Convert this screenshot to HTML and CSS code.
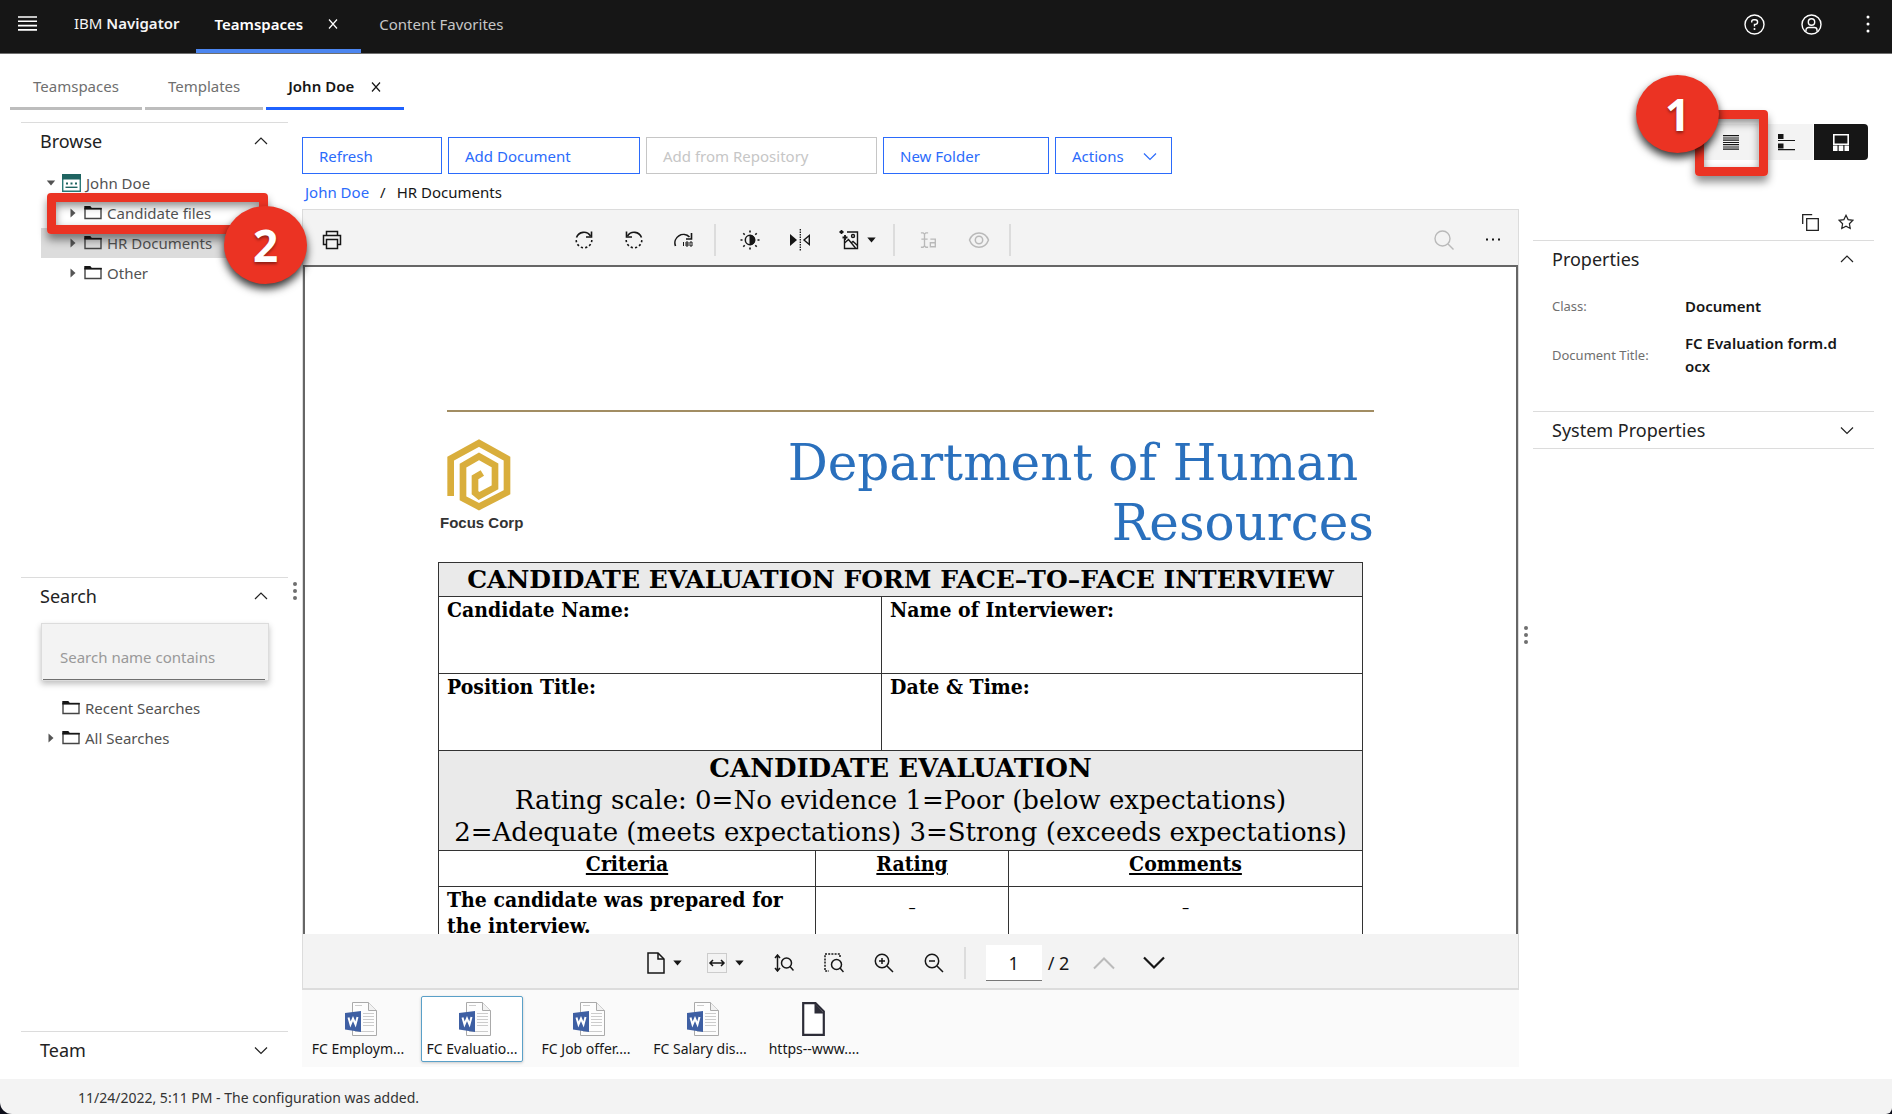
FILE: index.html
```html
<!DOCTYPE html>
<html lang="en">
<head>
<meta charset="utf-8">
<title>IBM Navigator - Teamspaces</title>
<link rel="stylesheet" href="styles.css">
</head>
<body>
<svg class="sprite" aria-hidden="true">
  <symbol id="chev-down" viewBox="0 0 14 14"><path d="M1 4.5l6 6 6-6" fill="none" stroke="currentColor" stroke-width="1.2"/></symbol>
  <symbol id="chev-up" viewBox="0 0 14 14"><path d="M1 10l6-6 6 6" fill="none" stroke="currentColor" stroke-width="1.2"/></symbol>
  <symbol id="close" viewBox="0 0 12 12"><path d="M2 1.500l8 9m0-9l-8 9" fill="none" stroke="currentColor" stroke-width="1.200"/></symbol>
  <symbol id="folder" viewBox="0 0 18 14"><path d="M1 12.500V2.500h16v10z" fill="none" stroke="#444" stroke-width="1.400"/><path d="M.3 0h6l1.500 2H17.700v1.500H.3z" fill="#161616"/></symbol>
  <symbol id="caret-right" viewBox="0 0 6 10"><path d="M.5.5l5 4.500-5 4.500z" fill="#555"/></symbol>
  <symbol id="caret-down" viewBox="0 0 9 6"><path d="M.3.5h8.400L4.500 5.500z" fill="currentColor"/></symbol>
  <symbol id="word" viewBox="-6 0 38 34">
    <path d="M7.500.5h16l8 8v25h-24z" fill="#fdfdfd" stroke="#aaa"/>
    <path d="M23.500.5v8h8" fill="#f2f2f2" stroke="#aaa"/>
    <path d="M10 3.500h7M18 11.500h11M18 14.500h11M18 17.500h11M18 20.500h11M18 23.500h11M10 29.500h19" stroke="#ccc" fill="none"/>
    <path d="M0 11l16-2v21L0 27.500z" fill="#3e5fa3"/>
    <path d="M3.500 15.500l2 7 2.500-6 2.500 6 2-7.500" fill="none" stroke="#fff" stroke-width="2"/>
  </symbol>
</svg>

<header class="topbar">
  <button class="icon-btn menu-btn" aria-label="Menu"><svg width="19" height="15" viewBox="0 0 19 15"><path d="M0 1h19M0 5.300h19M0 9.600h19M0 13.900h19" stroke="#fff" stroke-width="1.600"/></svg></button>
  <a class="brand" href="#">IBM <b>Navigator</b></a>
  <nav class="top-tabs">
    <a class="top-tab active" href="#">Teamspaces<svg width="12" height="12"><use href="#close"/></svg></a>
    <a class="top-tab" href="#">Content Favorites</a>
  </nav>
  <div class="top-actions">
    <button class="icon-btn" aria-label="Help"><svg width="21" height="21" viewBox="0 0 21 21" fill="none" stroke="#fff" stroke-width="1.400"><circle cx="10.500" cy="10.500" r="9.500"/><path d="M7.700 8.600V7.800a2 2 0 0 1 2-2h1.600a2.300 2.300 0 0 1 0 4.600h-.8v2.200"/><circle cx="10.500" cy="15" r="1" fill="#fff" stroke="none"/></svg></button>
    <button class="icon-btn" aria-label="User"><svg width="21" height="21" viewBox="0 0 21 21" fill="none" stroke="#fff" stroke-width="1.400"><circle cx="10.500" cy="10.500" r="9.500"/><circle cx="10.500" cy="8" r="3.200"/><path d="M5 17.500V16a2.500 2.500 0 0 1 2.500-2.500h6A2.500 2.500 0 0 1 16 16v1.500"/></svg></button>
    <button class="icon-btn" aria-label="More"><svg width="4" height="18" viewBox="0 0 4 18" fill="#fff"><circle cx="2" cy="2" r="1.500"/><circle cx="2" cy="9" r="1.500"/><circle cx="2" cy="16" r="1.500"/></svg></button>
  </div>
</header>

<nav class="page-tabs">
  <a class="page-tab" href="#">Teamspaces</a>
  <a class="page-tab" href="#">Templates</a>
  <a class="page-tab active" href="#">John Doe<svg width="12" height="12"><use href="#close"/></svg></a>
</nav>

<div class="workspace">
  <aside class="sidebar">
    <section class="panel grow">
      <button class="panel-head">Browse<svg width="14" height="14"><use href="#chev-up"/></svg></button>
      <ul class="tree">
        <li class="node root"><svg class="twisty" width="9" height="6"><use href="#caret-down"/></svg><svg width="19" height="18" viewBox="0 0 19 18"><path d="M.7.7h17.600v16.600H.7z" fill="#fff" stroke="#2b7a78" stroke-width="1.400"/><path d="M0 0h19v5.500H0z" fill="#1f6461"/><path d="M4 9.500h2m2.500 0h2m2.500 0h2" stroke="#1f6461" stroke-width="1.800"/><path d="M3.500 13.300h12" stroke="#1f6461" stroke-width="1.400"/></svg>John Doe</li>
        <li class="node child">
          <svg class="twisty" width="6" height="10"><use href="#caret-right"/></svg><svg width="18" height="14"><use href="#folder"/></svg>Candidate files
          <span class="mark mark-files"></span><span class="badge badge-two">2</span>
        </li>
        <li class="node child selected"><svg class="twisty" width="6" height="10"><use href="#caret-right"/></svg><svg width="18" height="14"><use href="#folder"/></svg>HR Documents</li>
        <li class="node child"><svg class="twisty" width="6" height="10"><use href="#caret-right"/></svg><svg width="18" height="14"><use href="#folder"/></svg>Other</li>
      </ul>
    </section>
    <section class="panel grow">
      <button class="panel-head">Search<svg width="14" height="14"><use href="#chev-up"/></svg></button>
      <label class="search-field"><input type="text" placeholder="Search name contains" aria-label="Search name contains"></label>
      <ul class="tree">
        <li class="node root"><span class="twisty"></span><svg width="18" height="14"><use href="#folder"/></svg>Recent Searches</li>
        <li class="node root"><svg class="twisty" width="6" height="10"><use href="#caret-right"/></svg><svg width="18" height="14"><use href="#folder"/></svg>All Searches</li>
      </ul>
    </section>
    <section class="panel">
      <button class="panel-head">Team<svg width="14" height="14"><use href="#chev-down"/></svg></button>
    </section>
  </aside>
  <div class="splitter"><i></i><i></i><i></i></div>

  <main class="main">
    <div class="actions">
      <button class="action w-refresh">Refresh</button>
      <button class="action w-add">Add Document</button>
      <button class="action w-repo" disabled>Add from Repository</button>
      <button class="action w-folder">New Folder</button>
      <button class="action w-actions">Actions<svg width="14" height="14"><use href="#chev-down"/></svg></button>
    </div>
    <nav class="crumbs"><a href="#">John Doe</a><span>/</span><span>HR Documents</span></nav>

    <div class="viewer">
      <div class="toolbar">
        <button class="tool" aria-label="Print"><svg width="20" height="20" viewBox="0 0 20 20" fill="none" stroke="#161616" stroke-width="1.500"><path d="M4.500 5.500v-4h11v4M4.500 14.500H1.500v-9h17v9h-3"/><path d="M4.500 9.500h11v9h-11z"/></svg></button>
        <div class="tool-group">
          <button class="tool" aria-label="Rotate clockwise"><svg width="20" height="20" viewBox="0 0 20 20" fill="none" stroke="#161616" stroke-width="1.600"><path d="M2.500 7.500a7.800 7.800 0 0 1 14-1.500"/><path d="M17.500 1.500v5.500H12"/><path d="M17.800 10a7.800 7.800 0 0 1-15.600 0" stroke-dasharray="2.200 2.200"/></svg></button>
          <button class="tool" aria-label="Rotate counterclockwise"><svg width="20" height="20" viewBox="0 0 20 20" fill="none" stroke="#161616" stroke-width="1.600"><path d="M17.500 7.500a7.800 7.800 0 0 0-14-1.500"/><path d="M2.500 1.500v5.500H8"/><path d="M2.200 10a7.800 7.800 0 0 0 15.600 0" stroke-dasharray="2.200 2.200"/></svg></button>
          <button class="tool" aria-label="Rotate 180"><svg width="20" height="20" viewBox="0 0 20 20" fill="none" stroke="#161616" stroke-width="1.600"><path d="M1.500 16a8.500 8.500 0 0 1 14-9"/><path d="M17.500 3v6H12"/><path d="M9.500 12v4M12 12h2v4h-2zm0 2h2M16 12h2v4h-2z" stroke-width="1"/></svg></button>
          <span class="rule"></span>
          <button class="tool" aria-label="Brightness"><svg width="20" height="20" viewBox="0 0 20 20" fill="none" stroke="#161616"><circle cx="10" cy="10" r="4.700" stroke-width="1.500"/><path d="M10 5.300a4.700 4.700 0 0 1 0 9.400z" fill="#161616"/><path d="M10 .5v2m0 15v2M.5 10h2m15 0h2M3.300 3.300l1.400 1.400m10.600 10.600l1.400 1.400m0-13.400l-1.400 1.400M4.700 15.300l-1.400 1.400" stroke-width="1.600"/></svg></button>
          <button class="tool" aria-label="Flip"><svg width="22" height="22" viewBox="0 0 22 22"><path d="M1 5v12l7-6z" fill="#161616"/><path d="M20.300 6.500v9L15 11z" fill="none" stroke="#161616" stroke-width="1.400"/><path d="M11.300 0v22" stroke="#161616" stroke-width="1.300" stroke-dasharray="1.500 1"/></svg></button>
          <button class="tool drop" aria-label="Image"><svg width="20" height="20" viewBox="0 0 20 20" fill="none" stroke="#161616" stroke-width="1.400"><path d="M8 2h10.500v16.500h-13V9"/><circle cx="14" cy="6" r="1.500"/><path d="M5.500 13l4-3.500 7 8.500M12 13l2-1.500 4.500 4"/><path d="M2.500 0v4M.5 2h4M6 5v5M3.500 7.500h5" stroke-width="1.800"/></svg><svg width="9" height="6"><use href="#caret-down"/></svg></button>
          <span class="rule"></span>
          <button class="tool" aria-label="Select text" disabled><svg width="18" height="18" viewBox="0 0 20 20" fill="none" stroke="#b9b9b9" stroke-width="1.500"><path d="M1 2h2.500L5 3.500 6.500 2H9M5 3.500v13M1 18h2.500L5 16.500 6.500 18H9M1.500 9h7M11.500 9h5.500v8.500h-5.500v-4.500h5.500"/></svg></button>
          <button class="tool" aria-label="Show" disabled><svg width="22" height="20" viewBox="0 0 22 20" fill="none" stroke="#b9b9b9" stroke-width="1.500"><path d="M1.500 10C5 .5 17 .5 20.500 10 17 19.500 5 19.500 1.500 10z"/><circle cx="11" cy="10" r="3.700"/></svg></button>
          <span class="rule"></span>
        </div>
        <div class="tool-end">
          <button class="tool" aria-label="Find" disabled><svg width="20" height="20" viewBox="0 0 20 20" fill="none" stroke="#b9b9b9" stroke-width="1.400"><circle cx="8.500" cy="8.500" r="7.500"/><path d="M14 14l5.500 5.500"/></svg></button>
          <button class="tool" aria-label="More"><svg width="14" height="3" viewBox="0 0 14 3" fill="#161616"><path d="M0 .5h2v2H0zM6 .5h2v2H6zM12 .5h2v2h-2z"/></svg></button>
        </div>
      </div>

      <div class="canvas">
        <article class="sheet">
          <header class="sheet-head">
            <div class="corp"><svg width="64" height="72" viewBox="82 145 192 216"><path d="M93 316V204L178 157l84 47v101l-84 43-48-25v-98l48-28 48 27v66l-48 26-12-10v-46l22-13" fill="none" stroke="#d9ae3c" stroke-width="20"/></svg><strong>Focus Corp</strong></div>
            <h1>Department of Human&nbsp;<br>Resources</h1>
          </header>
          <table class="form">
            <colgroup><col class="half"><col></colgroup>
            <tr><th class="shade title" colspan="2">CANDIDATE EVALUATION FORM FACE–TO–FACE INTERVIEW</th></tr>
            <tr class="tall"><th>Candidate Name:</th><th>Name of Interviewer:</th></tr>
            <tr class="tall"><th>Position Title:</th><th>Date &amp; Time:</th></tr>
          </table>
          <table class="form rate-form">
            <colgroup><col class="c-crit"><col class="c-rate"><col></colgroup>
            <tr><td class="shade scale" colspan="3"><b>CANDIDATE EVALUATION</b><br>Rating scale: 0=No evidence 1=Poor (below expectations)<br>2=Adequate (meets expectations) 3=Strong (exceeds expectations)</td></tr>
            <tr class="heads"><th>Criteria</th><th>Rating</th><th>Comments</th></tr>
            <tr><th>The candidate was prepared for the interview.</th><td class="dash">–</td><td class="dash">–</td></tr>
          </table>
        </article>
      </div>

      <div class="toolbar pager">
        <button class="tool drop" aria-label="Page layout"><svg width="18" height="22" viewBox="0 0 18 22" fill="none" stroke="#161616" stroke-width="1.500"><path d="M1 1h10l6 6v14H1z"/><path d="M11 1v6h6"/></svg><svg width="9" height="6"><use href="#caret-down"/></svg></button>
        <button class="tool drop" aria-label="Fit width"><svg width="20" height="20" viewBox="0 0 20 20" fill="none"><rect x=".5" y=".5" width="19" height="19" stroke="#ccc"/><path d="M3 10h14M6 7l-3 3 3 3M14 7l3 3-3 3" stroke="#161616" stroke-width="1.500"/></svg><svg width="9" height="6"><use href="#caret-down"/></svg></button>
        <button class="tool" aria-label="Fit height"><svg width="20" height="18" viewBox="0 0 20 18" fill="none" stroke="#161616" stroke-width="1.500"><path d="M3.500 1.500v15M1 4l2.500-3L6 4M1 14l2.500 3L6 14"/><circle cx="12.500" cy="9" r="5"/><path d="M16 12.500l3.500 4"/></svg></button>
        <button class="tool" aria-label="Zoom area"><svg width="20" height="20" viewBox="0 0 20 20" fill="none" stroke="#161616" stroke-width="1.500"><path d="M16 4V1H1v17h4" stroke-dasharray="2 1.200"/><circle cx="12.500" cy="11.500" r="5"/><path d="M16 15l3.500 4"/></svg></button>
        <button class="tool" aria-label="Zoom in"><svg width="20" height="20" viewBox="0 0 20 20" fill="none" stroke="#161616" stroke-width="1.500"><circle cx="8" cy="8" r="6.700"/><path d="M13 13l6 6M8 5v6M5 8h6"/></svg></button>
        <button class="tool" aria-label="Zoom out"><svg width="20" height="20" viewBox="0 0 20 20" fill="none" stroke="#161616" stroke-width="1.500"><circle cx="8" cy="8" r="6.700"/><path d="M13 13l6 6M5 8h6"/></svg></button>
        <span class="rule"></span>
        <label class="page-no"><input type="text" value="1" aria-label="Page number">/ 2</label>
        <button class="tool" aria-label="Previous page" disabled><svg width="24" height="14" viewBox="0 0 24 14"><path d="M2 12.500L12 2.500l10 10" fill="none" stroke="#bbb" stroke-width="2"/></svg></button>
        <button class="tool" aria-label="Next page"><svg width="24" height="14" viewBox="0 0 24 14"><path d="M2 1.500l10 10 10-10" fill="none" stroke="#161616" stroke-width="2.200"/></svg></button>
      </div>
    </div>

    <div class="filmstrip">
      <button class="film"><svg width="38" height="34"><use href="#word"/></svg>FC Employm...</button>
      <button class="film current"><svg width="38" height="34"><use href="#word"/></svg>FC Evaluatio...</button>
      <button class="film"><svg width="38" height="34"><use href="#word"/></svg>FC Job offer....</button>
      <button class="film"><svg width="38" height="34"><use href="#word"/></svg>FC Salary dis...</button>
      <button class="film"><svg width="32" height="34" viewBox="0 0 32 34"><path d="M5.200 1.200h12.300l8.300 8.300v23.300H5.200z" fill="#fff" stroke="#2d2d38" stroke-width="2.200"/><path d="M16.500 1v10.500H26z" fill="#2d2d38"/></svg>https--www....</button>
    </div>
  </main>
  <div class="splitter low"><i></i><i></i><i></i></div>

  <aside class="details">
    <div class="views">
      <button class="view first" aria-label="Details view"><svg width="16" height="15" viewBox="0 0 16 15"><path d="M0 .7h16M0 3h16M0 5.200h16M0 7.500h16M0 9.700h16M0 12h16M0 14.200h16" stroke="#161616" stroke-width="1.200"/></svg><span class="mark mark-view"></span><span class="badge badge-one">1</span></button>
      <button class="view" aria-label="List view"><svg width="17" height="17" viewBox="0 0 17 17"><path d="M0 0h5.500v5H0zM0 9.500h5.500v5H0z" fill="#161616"/><path d="M0 6.500h17M0 15.700h17" stroke="#161616" stroke-width="1.200"/></svg></button>
      <button class="view on" aria-label="Filmstrip view"><svg width="16" height="17" viewBox="0 0 16 17"><path d="M.8.800h14.400v9.400H.8z" fill="none" stroke="#fff" stroke-width="1.600"/><path d="M0 11.500h4.500V17H0zM5.700 11.500h4.600V17H5.700zM11.500 11.500H16V17h-4.500z" fill="#fff"/></svg></button>
    </div>
    <div class="doc-tools">
      <button class="icon-btn" aria-label="Copy"><svg width="17" height="17" viewBox="0 0 17 17" fill="none" stroke="#222" stroke-width="1.300"><path d="M4.700 4.700h11.600v11.600H4.700zM.7 10V.7h9.500"/></svg></button>
      <button class="icon-btn" aria-label="Favorite"><svg width="16" height="16" viewBox="0 0 16 16" fill="none" stroke="#222" stroke-width="1.200"><path d="M8 1.300l2.100 4.300 4.800.7-3.500 3.400.8 4.800L8 12.200l-4.200 2.300.8-4.800L1.100 6.300l4.800-.7z"/></svg></button>
    </div>
    <section class="props">
      <button class="props-head">Properties<svg width="14" height="14"><use href="#chev-up"/></svg></button>
      <dl>
        <dt>Class:</dt><dd>Document</dd>
        <dt>Document Title:</dt><dd>FC Evaluation form.docx</dd>
      </dl>
    </section>
    <section class="props last">
      <button class="props-head">System Properties<svg width="14" height="14"><use href="#chev-down"/></svg></button>
    </section>
  </aside>
</div>

<footer class="status">11/24/2022, 5:11 PM - The configuration was added.</footer>
</body>
</html>
```

FILE: styles.css
```css
* { box-sizing: border-box; }

body {
  display: flex;
  flex-direction: column;
  height: 100vh;
  margin: 0;
  background: #0d0e1a;
  color: #161616;
  font-family: "Noto Sans", sans-serif;
  font-size: 15px;
  line-height: 20px;
}

button, input { font: inherit; color: inherit; }
button { padding: 0; border: 0; background: none; }
a { color: inherit; text-decoration: none; }
svg { display: block; flex: none; }
ul, dl, dd { margin: 0; padding: 0; list-style: none; }
.sprite { position: absolute; width: 0; height: 0; }
.icon-btn { display: grid; place-items: center; width: 24px; height: 24px; }

/* Top bar */
.topbar {
  display: flex;
  height: 54px;
  flex: none;
  background: #161616;
  border-bottom: 1px solid #6f6f6f;
  color: #f4f4f4;
}
.menu-btn { margin: 11px 0 0 15px; }
.brand { margin: 13px 17px 0 35px; }
.brand b { font-weight: 600; }
.top-tabs { display: flex; }
.top-tab {
  display: flex;
  gap: 24px;
  height: 53px;
  padding: 14px 18px 0;
  color: #c6c6c6;
}
.top-tab svg { margin-top: 4px; }
.top-tab.active { padding-right: 22px; border-bottom: 4px solid #4c86f0; color: #fff; font-weight: 600; }
.top-actions { display: flex; gap: 33px; margin: 12px 12px 0 auto; }

/* Second level tabs */
.page-tabs { display: flex; flex: none; gap: 3px; height: 56px; padding-left: 10px; background: #fff; }
.page-tab {
  display: flex;
  gap: 16px;
  padding: 22px 23px 0;
  border-bottom: 3px solid #bdbdbd;
  color: #6f6f6f;
}
.page-tab svg { margin-top: 5px; }
.page-tab.active { padding: 22px 22px 0; border-color: #1f62ff; color: #161616; font-weight: 600; }

.workspace { display: flex; flex: 1; min-height: 0; background: #fff; }

/* Left column */
.sidebar { display: flex; flex-direction: column; flex: none; width: 267px; margin: 12px 0 0 21px; }
.panel { border-top: 1px solid #dcdcdc; min-height: 48px; }
.grow { flex: 1; }
.panel-head, .props-head {
  display: flex;
  align-items: center;
  justify-content: space-between;
  width: 100%;
  height: 36px;
  padding: 0 20px 0 19px;
  font-size: 18px;
  color: #222;
}
.tree { margin-left: 20px; }
.grow:first-child .tree { margin-top: 9px; }
.node {
  position: relative;
  display: flex;
  align-items: center;
  height: 30px;
  gap: 5px;
  color: #525252;
}
.root { padding-left: 4px; }
.child { padding-left: 26px; }
.twisty { width: 12px; color: #525252; }
.selected { background: #dcdcdc; }
.search-field {
  display: block;
  height: 58px;
  margin: 9px 19px 12px 20px;
  padding: 0 3px 0 1px;
  background: #f3f3f3;
  border: 1px solid #dcdcdc;
  box-shadow: 0 3px 6px rgba(0, 0, 0, .25);
}
.search-field input {
  width: 100%;
  height: 56px;
  padding: 12px 16px 0 17px;
  border: 0;
  border-bottom: 1px solid #6f6f6f;
  background: none;
}
.search-field input::placeholder { color: #999; opacity: 1; }

.splitter { display: grid; align-content: center; justify-content: center; gap: 3px; width: 14px; padding-bottom: 8px; }
.splitter i { width: 4px; height: 4px; border-radius: 50%; background: #6f6f6f; }
.splitter.low { padding: 80px 0 0; }

/* Centre column */
.main { display: flex; flex-direction: column; flex: 1; min-width: 0; margin-bottom: 12px; }
.actions { display: flex; gap: 6px; margin-top: 27px; }
.action {
  display: flex;
  align-items: center;
  justify-content: space-between;
  height: 37px;
  padding: 0 16px;
  border: 1px solid #2b6bfb;
  color: #2b6bfb;
}
.action:disabled { border-color: #c6c6c6; color: #c6c6c6; }
.w-refresh { width: 140px; }
.w-add { width: 192px; }
.w-repo { width: 231px; }
.w-folder { width: 166px; }
.w-actions { width: 117px; padding-right: 14px; }
.crumbs { display: flex; gap: 11px; height: 35px; padding: 8px 3px 0; }
.crumbs a { color: #2b6bfb; }

.viewer {
  display: flex;
  flex-direction: column;
  flex: 1;
  min-height: 0;
  border: 1px solid #dcdcdc;
  border-bottom: 2px solid #dcdcdc;
}
.toolbar { display: flex; align-items: center; flex: none; height: 55px; padding: 4px 10px 0 14px; background: #f3f3f3; }
.tool { display: flex; align-items: center; justify-content: center; min-width: 30px; height: 30px; }
.tool-group { display: flex; align-items: center; gap: 20px; margin-left: 222px; }
.tool-end { display: flex; gap: 19px; margin-left: auto; }
.drop { gap: 8px; }
.tool-group .drop { margin: 0 2px 0 4px; }
.rule { width: 2px; height: 32px; background: #dcdcdc; }
.tool-group .rule { margin: 0 -1px 0 -5px; }

.canvas { flex: 1; min-height: 0; overflow: hidden; border: 2px solid #666; border-width: 2px 2px 0; background: #fff; }
.sheet { width: 945px; margin: 143px auto 0; color: #000; font-family: "DejaVu Serif", serif; }
.sheet-head { display: flex; justify-content: space-between; height: 152px; margin: 0 9px; border-top: 2px solid #a28d63; }
.corp { display: grid; align-content: start; gap: 2px; margin: 27px 0 0 -7px; font-family: "Liberation Sans", sans-serif; font-size: 15px; }
.corp svg { margin-left: 7px; }
.corp strong { color: #333; }
.sheet h1 { margin: 21px 0 0; color: #2a70bd; font-size: 50px; font-weight: 400; line-height: 60px; text-align: right; }
.form { width: 925px; border-collapse: collapse; table-layout: fixed; font-family: "DejaVu Serif Condensed", "DejaVu Serif", serif; font-size: 21px; line-height: 26px; }
.form th, .form td { padding: 0 8px; border: 1px solid #333; font-weight: 700; text-align: left; vertical-align: top; }
.form .shade { padding: 1px 0 0; background: #eaeaea; text-align: center; font-family: "DejaVu Serif", serif; font-size: 26px; line-height: 32px; }
.form .title { height: 34px; font-size: 25px; }
.tall { height: 77px; }
.half { width: 443px; }
.rate-form { margin-top: -1px; }
.form .scale { height: 100px; font-weight: 400; }
.form .heads th { height: 36px; text-align: center; text-decoration: underline; }
.c-crit { width: 377px; }
.c-rate { width: 193px; }
.form .dash { padding-top: 8px; text-align: center; font-size: 16px; font-weight: 400; }

.pager { justify-content: center; gap: 20px; height: 54px; padding: 4px 5px 0 0; }
.pager .drop { margin-right: 5px; }
.pager .rule { margin: 0 0 0 -5px; }
.page-no { display: flex; align-items: center; gap: 6px; font-size: 18px; }
.page-no input { width: 56px; height: 36px; padding: 0; border: 0; border-bottom: 1px solid #777; background: #fff; text-align: center; }

.filmstrip { display: flex; gap: 12px; flex: none; height: 77px; padding: 6px 5px; background: #fafafa; }
.film {
  display: flex;
  flex-direction: column;
  align-items: center;
  gap: 3px;
  width: 102px;
  height: 66px;
  padding: 5px 0 0;
  border: 1px solid transparent;
  border-radius: 2px;
  font-size: 14px;
}
.film.current { border-color: #5aa0c8; background: #fff; box-shadow: 0 1px 3px rgba(0, 0, 0, .2); }

/* Right column */
.details { flex: none; width: 341px; margin-right: 18px; }
.views { display: flex; justify-content: flex-end; margin: 14px 6px 0 0; }
.view { position: relative; display: grid; place-items: center; width: 54px; height: 36px; background: #f3f3f3; }
.view + .view { margin-left: 1px; }
.view.on { border-radius: 0 4px 4px 0; background: #161616; }
.doc-tools { display: flex; justify-content: flex-end; gap: 12px; margin: 50px 16px 6px 0; }
.props { border-top: 1px solid #dcdcdc; }
.props dl {
  display: grid;
  grid-template-columns: 133px 156px;
  align-items: center;
  row-gap: 14px;
  margin: 18px 0 33px 19px;
  line-height: 23px;
}
.props dt { color: #6f6f6f; font-size: 13px; }
.props dd { font-weight: 600; word-break: break-all; }
.last { border-bottom: 1px solid #dcdcdc; }

/* Step markers laid over the interface */
.mark { position: absolute; z-index: 1; border: 9px solid #eb3323; border-radius: 4px; box-shadow: 0 6px 9px rgba(0, 0, 0, .45), inset 0 4px 9px rgba(0, 0, 0, .45); pointer-events: none; }
.mark-files { top: -5px; left: 6px; width: 221px; height: 41px; }
.mark-view { top: -14px; left: -9px; width: 73px; height: 66px; }
.badge {
  position: absolute;
  z-index: 2;
  display: grid;
  place-items: center;
  width: 83px;
  height: 78px;
  border-radius: 50%;
  background: #eb3323;
  box-shadow: 0 5px 9px rgba(0, 0, 0, .8);
  color: #fff;
  font-family: "Open Sans", sans-serif;
  font-size: 44px;
  font-weight: 700;
  line-height: 44px;
  text-shadow: 0 2px 3px rgba(0, 0, 0, .4);
}
.badge-two { top: 8px; left: 183px; }
.badge-one { top: -49px; left: -68px; }

.status {
  flex: none;
  height: 35px;
  padding: 9px 78px;
  border-radius: 0 0 6px 12px;
  background: #f3f3f3;
  font-size: 14px;
  color: #333;
}
```
